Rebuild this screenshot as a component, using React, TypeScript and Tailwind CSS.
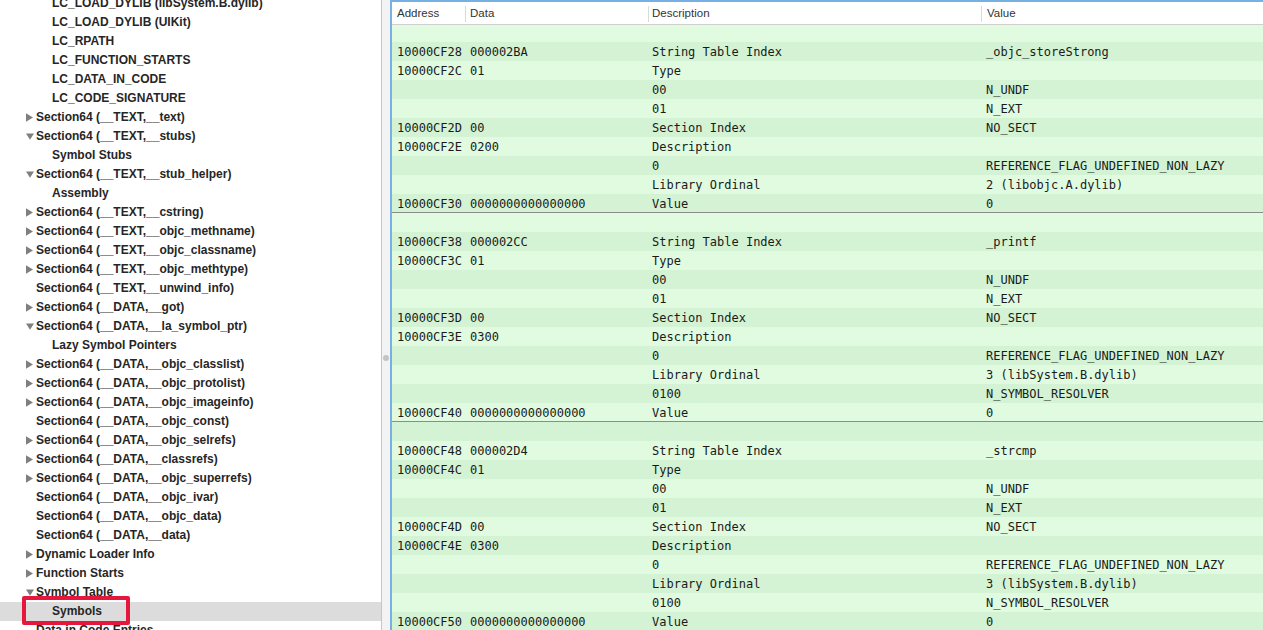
import React from "react";

type TreeItem = { label: string; level: 1 | 2; tri?: "right" | "down"; selected?: boolean };

const tree: TreeItem[] = [
  { label: "LC_LOAD_DYLIB (libSystem.B.dylib)", level: 2 },
  { label: "LC_LOAD_DYLIB (UIKit)", level: 2 },
  { label: "LC_RPATH", level: 2 },
  { label: "LC_FUNCTION_STARTS", level: 2 },
  { label: "LC_DATA_IN_CODE", level: 2 },
  { label: "LC_CODE_SIGNATURE", level: 2 },
  { label: "Section64 (__TEXT,__text)", level: 1, tri: "right" },
  { label: "Section64 (__TEXT,__stubs)", level: 1, tri: "down" },
  { label: "Symbol Stubs", level: 2 },
  { label: "Section64 (__TEXT,__stub_helper)", level: 1, tri: "down" },
  { label: "Assembly", level: 2 },
  { label: "Section64 (__TEXT,__cstring)", level: 1, tri: "right" },
  { label: "Section64 (__TEXT,__objc_methname)", level: 1, tri: "right" },
  { label: "Section64 (__TEXT,__objc_classname)", level: 1, tri: "right" },
  { label: "Section64 (__TEXT,__objc_methtype)", level: 1, tri: "right" },
  { label: "Section64 (__TEXT,__unwind_info)", level: 1 },
  { label: "Section64 (__DATA,__got)", level: 1, tri: "right" },
  { label: "Section64 (__DATA,__la_symbol_ptr)", level: 1, tri: "down" },
  { label: "Lazy Symbol Pointers", level: 2 },
  { label: "Section64 (__DATA,__objc_classlist)", level: 1, tri: "right" },
  { label: "Section64 (__DATA,__objc_protolist)", level: 1, tri: "right" },
  { label: "Section64 (__DATA,__objc_imageinfo)", level: 1, tri: "right" },
  { label: "Section64 (__DATA,__objc_const)", level: 1 },
  { label: "Section64 (__DATA,__objc_selrefs)", level: 1, tri: "right" },
  { label: "Section64 (__DATA,__classrefs)", level: 1, tri: "right" },
  { label: "Section64 (__DATA,__objc_superrefs)", level: 1, tri: "right" },
  { label: "Section64 (__DATA,__objc_ivar)", level: 1 },
  { label: "Section64 (__DATA,__objc_data)", level: 1 },
  { label: "Section64 (__DATA,__data)", level: 1 },
  { label: "Dynamic Loader Info", level: 1, tri: "right" },
  { label: "Function Starts", level: 1, tri: "right" },
  { label: "Symbol Table", level: 1, tri: "down" },
  { label: "Symbols", level: 2, selected: true },
  { label: "Data in Code Entries", level: 1 },
];

type Row = [string, string, string, string, boolean?];

const group = (
  a: [string, string, string, string, string, string],
  str: string,
  descData: string,
  ordinal: string,
  resolver: boolean
): Row[] => {
  const rows: Row[] = [
    ["", "", "", ""],
    [a[0], a[1], "String Table Index", str],
    [a[2], "01", "Type", ""],
    ["", "", "00", "N_UNDF"],
    ["", "", "01", "N_EXT"],
    [a[3], "00", "Section Index", "NO_SECT"],
    [a[4], descData, "Description", ""],
    ["", "", "0", "REFERENCE_FLAG_UNDEFINED_NON_LAZY"],
    ["", "", "Library Ordinal", ordinal],
  ];
  if (resolver) rows.push(["", "", "0100", "N_SYMBOL_RESOLVER"]);
  rows.push([a[5], "0000000000000000", "Value", "0", true]);
  return rows;
};

const rows: Row[] = [
  ...group(["10000CF28", "000002BA", "10000CF2C", "10000CF2D", "10000CF2E", "10000CF30"], "_objc_storeStrong", "0200", "2 (libobjc.A.dylib)", false),
  ...group(["10000CF38", "000002CC", "10000CF3C", "10000CF3D", "10000CF3E", "10000CF40"], "_printf", "0300", "3 (libSystem.B.dylib)", true),
  ...group(["10000CF48", "000002D4", "10000CF4C", "10000CF4D", "10000CF4E", "10000CF50"], "_strcmp", "0300", "3 (libSystem.B.dylib)", true),
];

function Tri({ dir }: { dir: "right" | "down" }) {
  return (
    <svg width="12" height="19" viewBox="0 0 12 19" className="shrink-0">
      {dir === "right" ? (
        <polygon points="2,5.3 9,9.5 2,13.7" fill="#7f7f7f" />
      ) : (
        <polygon points="2,6.5 10,6.5 6,12.7" fill="#7f7f7f" />
      )}
    </svg>
  );
}

export default function App() {
  return (
    <div className="flex h-[630px] w-[1263px] overflow-hidden bg-white">
      {/* Left tree pane */}
      <div className="relative w-[382px] shrink-0 overflow-hidden border-r border-[#c6c6c6] bg-white">
        <div className="mt-[-6px] flex flex-col">
          {tree.map((t, i) => (
            <div
              key={i}
              className={
                "flex h-[19px] items-center whitespace-nowrap text-[12px] font-bold leading-[19px] text-[#262626] " +
                (t.selected ? "bg-[#dcdcdc]" : "")
              }
              style={{ fontFamily: '"Liberation Sans", Arial, sans-serif' }}
            >
              {t.level === 2 ? (
                <span className="pl-[52px]">{t.label}</span>
              ) : (
                <div className="flex items-center pl-[24px]">
                  {t.tri ? <Tri dir={t.tri} /> : <span className="w-[12px] shrink-0" />}
                  <span>{t.label}</span>
                </div>
              )}
            </div>
          ))}
        </div>
        <div className="pointer-events-none absolute left-[22px] top-[596px] h-[29px] w-[108px] rounded-[2px] border-[4px] border-[#e6173d]" />
      </div>

      {/* Split view divider */}
      <div className="relative w-[8px] shrink-0 bg-[#f3f3f3]">
        <div className="absolute left-[1px] top-[355px] h-[6px] w-[6px] rounded-full bg-[#c4c4c4]" />
      </div>

      {/* Right table pane */}
      <div className="flex min-w-0 flex-1 flex-col overflow-hidden border-l-2 border-t-2 border-[#77b0e2]">
        <div
          className="flex h-[23px] shrink-0 items-center border-b border-[#cfcfcf] bg-white pt-[2px] text-[11.5px] text-[#333]"
          style={{ fontFamily: '"Liberation Sans", Arial, sans-serif' }}
        >
          <div className="w-[73px] shrink-0 pl-[5px]">Address</div>
          <div className="flex h-[16px] w-[183px] shrink-0 items-center border-l border-[#dadada] pl-[4px]">Data</div>
          <div className="flex h-[16px] w-[333px] shrink-0 items-center border-l border-[#dadada] pl-[3px]">Description</div>
          <div className="flex h-[16px] flex-1 items-center border-l border-[#dadada] pl-[5px]">Value</div>
        </div>
        <div className="min-h-0 flex-1 overflow-hidden">
          <div
            className="mt-[-2px] flex flex-col text-[12px] text-[#1a1a1a]"
            style={{ fontFamily: '"DejaVu Sans Mono", "Liberation Mono", monospace' }}
          >
            {rows.map((r, i) => (
              <div
                key={i}
                className={
                  "box-border flex h-[19px] shrink-0 whitespace-pre " +
                  (i % 2 === 0 ? "bg-[#e0fbe0] " : "bg-[#d4f3d4] ") +
                  (r[4] ? "border-b border-[#8c8c8c]" : "")
                }
              >
                <div className="w-[73px] shrink-0 pl-[5px] pt-[2px] leading-[17px]">{r[0]}</div>
                <div className="w-[183px] shrink-0 pl-[5px] pt-[2px] leading-[17px]">{r[1]}</div>
                <div className="w-[333px] shrink-0 pl-[4px] pt-[2px] leading-[17px]">{r[2]}</div>
                <div className="flex-1 pl-[5px] pt-[2px] leading-[17px]">{r[3]}</div>
              </div>
            ))}
          </div>
        </div>
      </div>
    </div>
  );
}
